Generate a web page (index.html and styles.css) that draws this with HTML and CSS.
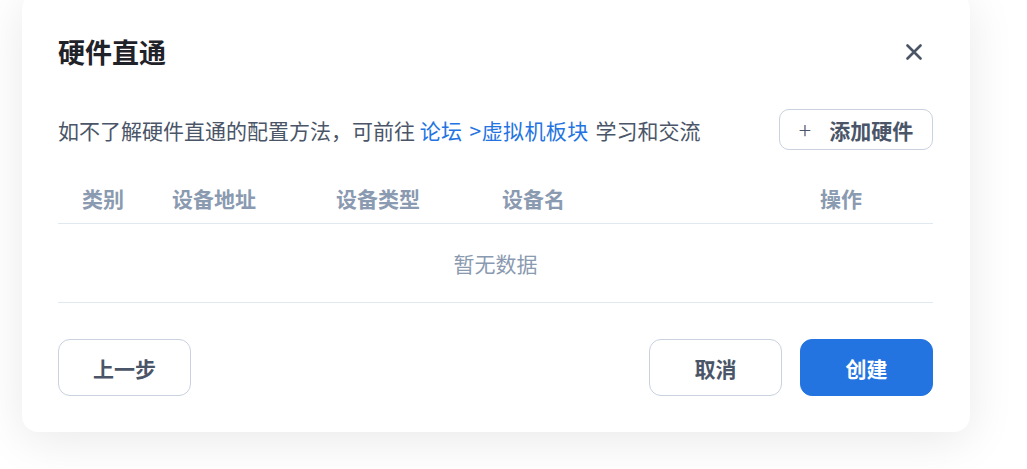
FILE: index.html
```html
<!DOCTYPE html>
<html lang="zh-CN">
<head>
<meta charset="utf-8">
<title>硬件直通</title>
<link rel="stylesheet" href="styles.css">
</head>
<body>
<div class="dialog">
  <div class="dialog-head">
    <h1 class="title">硬件直通</h1>
    <button class="close" aria-label="关闭">
      <svg width="16" height="16" viewBox="0 0 16 16"><path d="M1.5 1.5 L14.5 14.5 M14.5 1.5 L1.5 14.5" stroke="#4a5568" stroke-width="2.6" stroke-linecap="round" fill="none"/></svg>
    </button>
  </div>
  <div class="intro">
    <p class="desc">如不了解硬件直通的配置方法，可前往 <a class="link" href="#">论坛 &gt;虚拟机板块</a> 学习和交流</p>
    <button class="btn btn-add"><span class="plus">+</span>添加硬件</button>
  </div>
  <div class="table">
    <div class="thead">
      <div class="th">类别</div>
      <div class="th">设备地址</div>
      <div class="th">设备类型</div>
      <div class="th">设备名</div>
      <div class="th">操作</div>
    </div>
    <div class="empty">暂无数据</div>
  </div>
  <div class="footer">
    <button class="btn btn-lg">上一步</button>
    <div class="footer-right">
      <button class="btn btn-lg">取消</button>
      <button class="btn btn-lg btn-primary">创建</button>
    </div>
  </div>
</div>
</body>
</html>
```
FILE: styles.css
```css
* { box-sizing: border-box; }
html, body { margin: 0; padding: 0; }
body {
  background: #ffffff;
  font-family: "Noto Sans CJK SC", "Noto Sans", sans-serif;
  width: 1027px;
  height: 469px;
  overflow: hidden;
}
.dialog {
  margin: -7px 0 0 22px;
  width: 948px;
  background: #fff;
  border-radius: 16px;
  padding: 39px 37px 36px 36px;
  box-shadow: 0 8px 48px rgba(0, 0, 0, 0.09);
  display: flex;
  flex-direction: column;
}
.dialog-head {
  height: 40px;
  display: flex;
  align-items: center;
  justify-content: space-between;
}
.title {
  margin: 0;
  font-size: 27px;
  font-weight: 700;
  color: #1f2329;
  line-height: 40px;
}
.close {
  border: 0;
  background: none;
  padding: 0;
  width: 16px;
  height: 16px;
  margin-right: 11px;
  display: flex;
}
.intro {
  margin-top: 37px;
  height: 41px;
  display: flex;
  align-items: center;
  justify-content: space-between;
}
.desc {
  margin: 0;
  font-size: 21px;
  color: #4a5568;
}
.link {
  color: #2374e1;
  text-decoration: none;
  letter-spacing: 0.4px;
  word-spacing: 2px;
  margin-right: 2px;
}
.btn {
  font-family: inherit;
  background: #fff;
  border: 1px solid #c9d2de;
  color: #4a5568;
  font-weight: 700;
  font-size: 21px;
  cursor: pointer;
  display: flex;
  align-items: center;
  justify-content: center;
}
.btn-add {
  width: 154px;
  height: 41px;
  border-radius: 10px;
  padding-left: 6px;
}
.plus {
  font-weight: 300;
  font-size: 23px;
  margin-right: 18px;
  line-height: 1;
}
.table {
  margin-top: 22px;
}
.thead {
  display: grid;
  grid-template-columns: 90px 164px 166px 318px 137px;
  height: 52px;
  align-items: center;
  border-bottom: 1px solid #e2e8f0;
}
.th {
  padding-left: 24px;
  font-size: 21px;
  font-weight: 700;
  color: #8a9ab0;
}
.empty {
  height: 79px;
  display: flex;
  align-items: center;
  justify-content: center;
  font-size: 21px;
  color: #8a9ab0;
  border-bottom: 1px solid #e2e8f0;
}
.footer {
  margin-top: 36px;
  display: flex;
  justify-content: space-between;
}
.footer-right {
  display: flex;
  gap: 18px;
}
.btn-lg {
  width: 133px;
  height: 57px;
  border-radius: 12px;
}
.btn-primary {
  background: #2374e1;
  border-color: #2374e1;
  color: #fff;
}
```
